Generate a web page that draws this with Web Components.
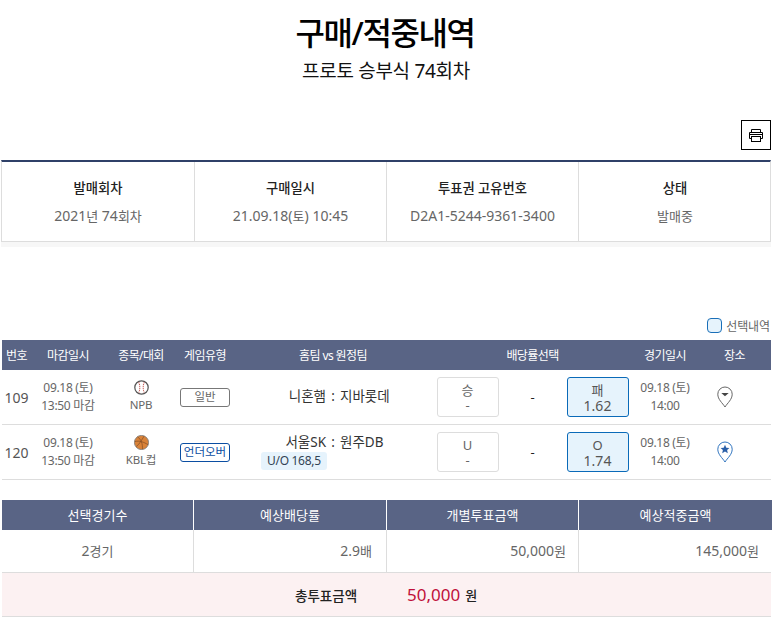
<!DOCTYPE html>
<html lang="ko">
<head>
<meta charset="utf-8">
<title>구매/적중내역</title>
<style>
  html, body { margin: 0; padding: 0; background: #fff; }
  body { font-family: "Noto Sans", "Noto Sans CJK KR", sans-serif; color: #333; }
  .ko { font-size: 13px; }
</style>
</head>
<body>
<purchase-page>
  <page-heading title-text="구매/적중내역" sub-text="프로토 승부식 74회차"></page-heading>
  <print-bar></print-bar>
  <info-table>
    <info-cell label="발매회차">2021<span class="ko">년</span> 74<span class="ko">회차</span></info-cell>
    <info-cell label="구매일시">21.09.18(<span class="ko">토</span>) 10:45</info-cell>
    <info-cell label="투표권 고유번호">D2A1-5244-9361-3400</info-cell>
    <info-cell label="상태"><span class="ko">발매중</span></info-cell>
  </info-table>
  <select-legend>선택내역</select-legend>
  <match-table>
    <match-row no="109" close-date="09.18 (토)" close-time="13:50 마감" league="NPB" sport="baseball" type="일반"
      home="니혼햄" away="지바롯데" a-label="승" a-odds="-" b-label="패" b-odds="1.62" date="09.18 (토)" time="14:00" pin="plain"></match-row>
    <match-row no="120" close-date="09.18 (토)" close-time="13:50 마감" league="KBL컵" sport="basketball" type="언더오버" type-on
      home="서울SK" away="원주DB" note="U/O 168,5" a-label="U" a-odds="-" b-label="O" b-odds="1.74" date="09.18 (토)" time="14:00" pin="star"></match-row>
  </match-table>
  <summary-table>
    <summary-col head="선택경기수" align="center">2<span class="ko">경기</span></summary-col>
    <summary-col head="예상배당률" pad="14">2.9<span class="ko">배</span></summary-col>
    <summary-col head="개별투표금액" pad="12">50,000<span class="ko">원</span></summary-col>
    <summary-col head="예상적중금액" pad="13">145,000<span class="ko">원</span></summary-col>
  </summary-table>
  <total-bar label="총투표금액" amount="50,000" unit="원"></total-bar>
</purchase-page>

<script>
// small helper so each element below stays short
function mount(el, css, html) {
  const shadow = el.attachShadow({mode: 'open'});
  shadow.innerHTML = `<style>${css}</style>${html}`;
}

class PurchasePage extends HTMLElement {
  constructor() {
    super();
    mount(this, `
      :host { display: flex; flex-direction: column; width: 772px; box-sizing: border-box; padding: 0 1px 0 1px; }
    `, `<slot></slot>`);
  }
}

class PageHeading extends HTMLElement {
  connectedCallback() {
    mount(this, `
      :host { display: flex; flex-direction: column; align-items: center; padding-top: 13px; }
      h1 { margin: 0; font-size: 32px; line-height: 40px; font-weight: 500; color: #000; letter-spacing: -1.4px; transform: translateX(-1px); }
      h2 { margin: 5px 0 0; font-size: 19px; line-height: 26px; font-weight: 400; color: #111; letter-spacing: -0.3px; }
    `, `<h1>${this.getAttribute('title-text')}</h1><h2>${this.getAttribute('sub-text')}</h2>`);
  }
}

class PrintBar extends HTMLElement {
  constructor() {
    super();
    mount(this, `
      :host { display: flex; justify-content: flex-end; padding-top: 36px; }
      button { width: 30px; height: 30px; box-sizing: border-box; padding: 0; border: 1px solid #000; background: #fff;
        display: flex; align-items: center; justify-content: center; }
      svg { display: block; }
    `, `<button aria-label="인쇄"><svg width="14" height="13" viewBox="0 0 14 13" fill="none" stroke="#000" stroke-width="1">
        <path d="M2.500 3.500V.5h9v3"/><path d="M2.500 9.500h-2v-6h13v6h-2"/><path d="M.5 5.500h13"/><rect x="2.500" y="7.500" width="9" height="5"/>
      </svg></button>`);
  }
}

class InfoTable extends HTMLElement {
  constructor() {
    super();
    mount(this, `
      :host { display: grid; grid-template-columns: 193px 192px 192px 192px; margin-top: 10px;
        border-top: 2px solid #2f4068; border-left: 1px solid #ddd; border-right: 1px solid #ddd; border-bottom: 1px solid #ddd; height: 79px;
        box-shadow: 0 5px 0 #f7f7f7; }
      ::slotted(info-cell:last-child) { border-right: 0; }
    `, `<slot></slot>`);
  }
}

class InfoCell extends HTMLElement {
  connectedCallback() {
    mount(this, `
      :host { display: flex; flex-direction: column; align-items: center; border-right: 1px solid #ddd; padding-top: 16px; }
      b { font-weight: 500; font-size: 13.300px; line-height: 20px; color: #222; }
      span { margin-top: 8px; font-size: 14px; line-height: 20px; color: #666; }
    `, `<b>${this.getAttribute('label')}</b><span><slot></slot></span>`);
  }
}

class SelectLegend extends HTMLElement {
  constructor() {
    super();
    mount(this, `
      :host { display: flex; justify-content: flex-end; align-items: center; gap: 4px; margin-top: 76px; height: 15px; padding-right: 1px;
        font-size: 12px; color: #666; }
      i { width: 15px; height: 15px; box-sizing: border-box; border: 1.5px solid #1a6fb8; border-radius: 4px; background: #e6f3fc; }
      span { letter-spacing: -0.1px; }
    `, `<i></i><span><slot></slot></span>`);
  }
}

const MATCH_COLS = '29px 74px 72px 56px 200px 199px 66px 73px';

class MatchTable extends HTMLElement {
  constructor() {
    super();
    const heads = ['번호', '마감일시', '종목/대회', '게임유형', '홈팀 vs 원정팀', '배당률선택', '경기일시', '장소'];
    mount(this, `
      :host { display: block; margin-top: 7px; }
      .head { display: grid; grid-template-columns: ${MATCH_COLS}; height: 30px; margin-left: 1px; background: #596485; color: #fff;
        font-size: 12px; letter-spacing: -0.6px; align-items: center; text-align: center; }
    `, `<div class="head">${heads.map(h => `<span>${h}</span>`).join('')}</div><slot></slot>`);
  }
}

const SPORT_ICONS = {
  baseball: `<svg width="15" height="15" viewBox="0 0 17 17" fill="none">
      <circle cx="8.5" cy="8.5" r="7.600" stroke="#555" stroke-width="1.400"/>
      <path d="M5.300 2.600C7 5.500 7 11.500 5.300 14.400M11.700 2.600C10 5.500 10 11.500 11.700 14.400" stroke="#c9605a" stroke-width="1.200" stroke-dasharray="1.300 .8"/>
    </svg>`,
  basketball: `<svg width="15" height="15" viewBox="0 0 17 17" fill="none">
      <circle cx="8.5" cy="8.5" r="8" fill="#d98238" stroke="#7d7a78" stroke-width="1"/>
      <path d="M1 7.500C6 6 11 8 16 11M4 2C8 5 10 10 9.500 16M11.500 1.200C9 5 6 11 2.500 13" stroke="#8a5227" stroke-width=".9"/>
    </svg>`
};

const PIN_ICONS = {
  plain: `<svg width="16" height="22" viewBox="0 0 16 22" fill="none">
      <path d="M8 21C5.500 17 .8 13.500.8 8.200a7.200 7.200 0 0 1 14.400 0C15.200 13.500 10.500 17 8 21z" stroke="#666" stroke-width="1"/>
      <path d="M4.300 7h7.400L8 10.300z" fill="#444"/>
    </svg>`,
  star: `<svg width="16" height="22" viewBox="0 0 16 22" fill="none">
      <path d="M8 21C5.500 17 .8 13.500.8 8.200a7.200 7.200 0 0 1 14.400 0C15.200 13.500 10.500 17 8 21z" stroke="#2f74bf" stroke-width="1"/>
      <path d="M8 3.800l1.300 2.900 3.100.3-2.300 2.100.7 3.100L8 10.600l-2.800 1.600.7-3.100L3.600 7l3.100-.3z" fill="#2a5fa8"/>
    </svg>`
};

class MatchRow extends HTMLElement {
  connectedCallback() {
    const a = n => this.getAttribute(n);
    const on = this.hasAttribute('type-on');
    const note = a('note') ? `<em>${a('note')}</em>` : '';
    mount(this, `
      :host { display: grid; grid-template-columns: ${MATCH_COLS}; height: 55px; margin-left: 1px; box-sizing: border-box;
        border-bottom: 1px solid #ddd; align-items: center; font-size: 12px; color: #666; text-align: center; }
      .no { font-size: 14px; color: #555; }
      .two { display: flex; flex-direction: column; line-height: 18px; margin-top: -1px; letter-spacing: -0.3px; }
      .sport { display: flex; flex-direction: column; align-items: center; font-size: 11.5px; letter-spacing: -0.2px; color: #666; line-height: 16px; gap: 2px; margin-top: -1px; }
      .sport svg { display: block; }
      .tag { justify-self: center; width: 50px; height: 19px; box-sizing: border-box; border: 1px solid #777; border-radius: 3px;
        font-size: 11.5px; line-height: 16px; color: #666; }
      .tag.on { border-color: #0b4ea2; color: #0b4ea2; }
      .team { display: flex; flex-direction: column; font-size: 13.5px; line-height: 20px; color: #333; padding-bottom: 2px; }
      .vs { display: grid; grid-template-columns: 1fr 14px 1fr; }
      .vs span:first-child { text-align: right; }
      .vs span:last-child { text-align: left; }
      .team em { align-self: flex-start; margin-left: 28px; padding: 0 6px; height: 18px; line-height: 18px; font-style: normal; font-size: 12px;
        letter-spacing: -0.3px; border-radius: 3px; background: #e6f3fc; color: #345; }
      .odds { display: flex; justify-content: center; align-items: center; gap: 0; }
      .odds b { font-weight: 400; font-size: 13px; color: #222; width: 68px; }
      .pin svg { display: block; margin: 0 auto; transform: translateX(-10px); }
      .date { color: #666; }
    `, `
      <span class="no">${a('no')}</span>
      <span class="two"><span>${a('close-date')}</span><span>${a('close-time')}</span></span>
      <span class="sport">${SPORT_ICONS[a('sport')]}<span>${a('league')}</span></span>
      <span class="tag ${on ? 'on' : ''}">${a('type')}</span>
      <span class="team"><span class="vs"><span>${a('home')}</span><span>:</span><span>${a('away')}</span></span>${note}</span>
      <span class="odds">
        <odds-box label="${a('a-label')}" value="${a('a-odds')}"></odds-box>
        <b>-</b>
        <odds-box selected label="${a('b-label')}" value="${a('b-odds')}"></odds-box>
      </span>
      <span class="two date"><span>${a('date')}</span><span>${a('time')}</span></span>
      <span class="pin">${PIN_ICONS[a('pin')]}</span>`);
  }
}

class OddsBox extends HTMLElement {
  connectedCallback() {
    mount(this, `
      :host { display: flex; flex-direction: column; justify-content: center; align-items: center; width: 62px; height: 40px; box-sizing: border-box;
        border: 1px solid #ddd; border-radius: 3px; background: #fff; color: #666; }
      :host([selected]) { border-color: #0a6ab8; background: #e6f3fc; color: #555; }
      span { font-size: 13px; line-height: 16px; }
      span + span { line-height: 14px; }
      :host([selected]) span + span { font-size: 14px; line-height: 15px; }
    `, `<span>${this.getAttribute('label')}</span><span>${this.getAttribute('value')}</span>`);
  }
}

class SummaryTable extends HTMLElement {
  constructor() {
    super();
    mount(this, `
      :host { display: grid; grid-template-columns: 192px 193px 192px 193px; margin: 20px 0 0 1px; }
      ::slotted(summary-col:last-child) { border-right: 0; }
    `, `<slot></slot>`);
  }
}

class SummaryCol extends HTMLElement {
  connectedCallback() {
    const center = this.getAttribute('align') === 'center';
    const pad = this.getAttribute('pad') || 13;
    mount(this, `
      :host { display: flex; flex-direction: column; border-right: 1px solid #ddd; }
      .h { height: 30px; line-height: 30px; text-align: center; font-size: 13px; color: #fff; background: #596485; box-shadow: 1px 0 0 #fff; }
      .v { height: 42px; line-height: 42px; font-size: 14px; color: #666; padding: 0 ${pad}px; text-align: ${center ? 'center' : 'right'}; }
    `, `<div class="h">${this.getAttribute('head')}</div><div class="v"><slot></slot></div>`);
  }
}

class TotalBar extends HTMLElement {
  connectedCallback() {
    const a = n => this.getAttribute(n);
    mount(this, `
      :host { display: flex; align-items: center; height: 45px; box-sizing: border-box; margin-left: 1px; background: #fcf1f2;
        border-top: 1px solid #ddd; border-bottom: 1px solid #ddd; padding-left: 293px; color: #222; font-size: 13.500px; font-weight: 500; }
      .amt { margin-left: 50px; font-size: 17px; font-weight: 400; color: #c0103a; }
      .unit { margin-left: 5px; font-size: 13px; }
    `, `<span>${a('label')}</span><span class="amt">${a('amount')}</span><span class="unit">${a('unit')}</span>`);
  }
}

customElements.define('purchase-page', PurchasePage);
customElements.define('page-heading', PageHeading);
customElements.define('print-bar', PrintBar);
customElements.define('info-table', InfoTable);
customElements.define('info-cell', InfoCell);
customElements.define('select-legend', SelectLegend);
customElements.define('match-table', MatchTable);
customElements.define('match-row', MatchRow);
customElements.define('odds-box', OddsBox);
customElements.define('summary-table', SummaryTable);
customElements.define('summary-col', SummaryCol);
customElements.define('total-bar', TotalBar);
</script>
</body>
</html>
